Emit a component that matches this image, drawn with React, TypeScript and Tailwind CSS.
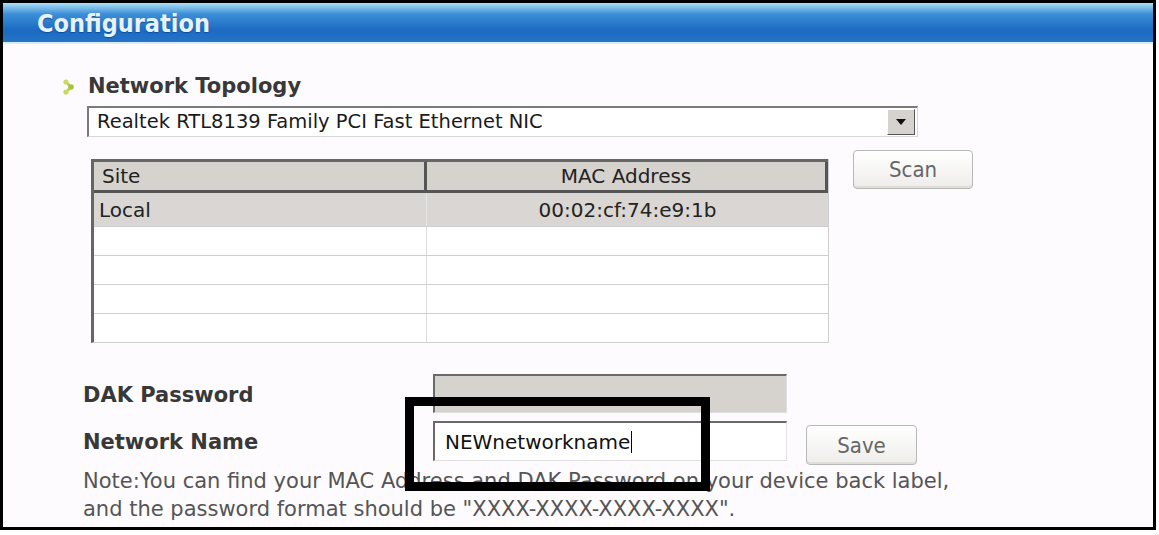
import React from "react";

const tahoma = { fontFamily: '"DejaVu Sans", Tahoma, sans-serif' };
const verdana = { fontFamily: '"DejaVu Sans", Verdana, sans-serif' };

function Bullet() {
  return (
    <svg width="12" height="16" viewBox="0 0 12 16" className="mr-[13px]">
      <circle cx="3" cy="3" r="2.6" fill="#c9da5c" />
      <circle cx="8" cy="8" r="2.8" fill="#a6c236" />
      <circle cx="3" cy="13" r="2.6" fill="#c9da5c" />
      <circle cx="5.5" cy="5.5" r="1.6" fill="#b8cf48" />
      <circle cx="5.5" cy="10.5" r="1.6" fill="#b8cf48" />
    </svg>
  );
}

function WinButton({ label, className }: { label: string; className: string }) {
  return (
    <button
      className={`rounded-[4px] border border-[#b8b8b8] bg-gradient-to-b from-white to-[#eeedea] text-[22px] text-[#666] shadow-[inset_0_-2px_0_#e0ded9] ${className}`}
      style={{ fontFamily: '"DejaVu Sans Condensed", "DejaVu Sans", sans-serif' }}
    >
      {label}
    </button>
  );
}

export default function App() {
  const emptyRows = [0, 1, 2, 3];
  return (
    <div className="w-[1159px] h-[535px] bg-white relative overflow-hidden">
      <div className="w-[1156px] h-[530px] border-[3px] border-black bg-[#fdfbfd] flex flex-col">
        <div className="h-[41px] bg-[linear-gradient(to_bottom,#aee0f6_0%,#3d8fd8_28%,#1c6ac2_70%,#2474c8_100%)] flex items-center pl-[34px] border-b-2 border-[#d8ebf8]">
          <span
            className="text-[25px] font-bold text-[#e6f3fd] leading-none mt-[2px] [text-shadow:0_1px_1px_#0d4f94]"
            style={{ fontFamily: '"DejaVu Sans Condensed", "DejaVu Sans", sans-serif' }}
          >
            Configuration
          </span>
        </div>

        <div className="pl-[60px] pt-[32px] flex flex-col">
          <div className="flex items-center h-[22px]">
            <Bullet />
            <span className="text-[21px] font-bold text-[#383838]" style={verdana}>
              Network Topology
            </span>
          </div>

          <div className="ml-[24px] mt-[8px] w-[831px] h-[31px] flex items-center border-t-2 border-l-2 border-[#7a7a7a] border-b border-r border-b-[#d8d8d8] border-r-[#d8d8d8] bg-white">
            <span className="flex-1 pl-[8px] text-[19.5px] text-[#1a1a1a]" style={tahoma}>
              Realtek RTL8139 Family PCI Fast Ethernet NIC
            </span>
            <div className="w-[28px] h-[26px] mr-[2px] bg-[#d6d3ce] border border-t-white border-l-white border-b-[#555] border-r-[#555] flex items-center justify-center">
              <svg width="10" height="6" viewBox="0 0 10 6">
                <path d="M0 0 H10 L5 6 Z" fill="#111" />
              </svg>
            </div>
          </div>

          <div className="flex items-start mt-[22px]">
            <div className="ml-[28px] w-[738px] flex flex-col border-l-[3px] border-[#666] border-r border-r-[#cfcfcf] border-b border-b-[#cfcfcf]" style={tahoma}>
              <div className="flex h-[34px] bg-[#d6d3cf] border-t-[3px] border-t-[#666] border-b-[3px] border-b-[#555] text-[20px] text-[#222]">
                <div className="w-[333px] pl-[8px] flex items-center border-r-[3px] border-[#555]">Site</div>
                <div className="flex-1 flex items-center justify-center border-r-[3px] border-[#555]">MAC Address</div>
              </div>
              <div className="flex h-[33px] bg-[#d9d6d3] text-[20px] text-[#222]">
                <div className="w-[333px] pl-[5px] flex items-center border-r border-[#e6e6e6]">Local</div>
                <div className="flex-1 flex items-center justify-center">00:02:cf:74:e9:1b</div>
              </div>
              {emptyRows.map((r) => (
                <div key={r} className="flex h-[29px] border-t border-[#cfcfcf] bg-white">
                  <div className="w-[333px] border-r border-[#dcdcdc]" />
                  <div className="flex-1" />
                </div>
              ))}
            </div>
            <WinButton label="Scan" className="ml-[24px] -mt-[9px] w-[120px] h-[39px]" />
          </div>

          <div className="flex items-center mt-[31px] h-[39px]">
            <span className="w-[370px] pl-[20px] pt-[4px] text-[21px] font-bold text-[#383838]" style={verdana}>
              DAK Password
            </span>
            <div className="w-[354px] h-[39px] bg-[#d6d3cf] border-t-2 border-l-2 border-[#6a6a6a] border-b border-r border-b-[#e0e0e0] border-r-[#e0e0e0]" />
          </div>

          <div className="flex items-start mt-[8px] h-[45px]">
            <span className="w-[370px] pl-[20px] pt-[6px] text-[21px] font-bold text-[#383838]" style={verdana}>
              Network Name
            </span>
            <div className="w-[354px] h-[40px] bg-white border-t-2 border-l-2 border-[#6a6a6a] border-b border-r border-b-[#e0e0e0] border-r-[#e0e0e0] flex items-center pl-[10px] text-[20px] text-[#111]" style={tahoma}>
              NEWnetworkname<span className="inline-block w-[1px] h-[22px] bg-black ml-[1px]" />
            </div>
            <WinButton label="Save" className="ml-[19px] mt-[4px] w-[111px] h-[40px]" />
          </div>

          <p className="pl-[20px] mt-[1px] text-[21px] leading-[28px] text-[#555]" style={verdana}>
            Note:You can find your MAC Address and DAK Password on your device back label,
            <br />
            and the password format should be "XXXX-XXXX-XXXX-XXXX".
          </p>
        </div>
      </div>

      <div className="absolute left-[405px] top-[397px] w-[305px] h-[94px] border-[9px] border-black" />
    </div>
  );
}
